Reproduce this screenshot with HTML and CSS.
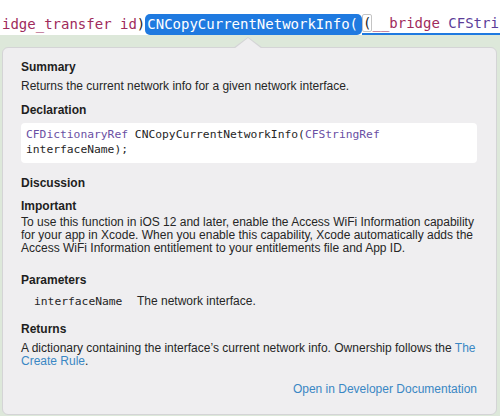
FILE: index.html
```html
<!DOCTYPE html>
<html>
<head>
<meta charset="utf-8">
<link rel="stylesheet" href="styles.css">
</head>
<body>
<div class="editor">
  <div class="codeline"><span class="kw">idge_transfer id</span>)<span class="sel">CNCopyCurrentNetworkInfo(</span><span class="rest"><span class="paren">(</span><span class="kw">__bridge</span> <span class="ty">CFStri</span></span></div>
  <div class="backdrop">
    <div class="popover">
      <h3 class="head">Summary</h3>
      <p class="text t-sum">Returns the current network info for a given network interface.</p>
      <h3 class="head h-decl">Declaration</h3>
      <div class="code"><span class="ty">CFDictionaryRef</span> CNCopyCurrentNetworkInfo(<span class="ty">CFStringRef</span><br>interfaceName);</div>
      <h3 class="head h-disc">Discussion</h3>
      <h3 class="head h-imp">Important</h3>
      <p class="text t-imp">To use this function in iOS 12 and later, enable the Access WiFi Information capability<br>for your app in Xcode. When you enable this capability, Xcode automatically adds the<br>Access WiFi Information entitlement to your entitlements file and App ID.</p>
      <h3 class="head h-par">Parameters</h3>
      <div class="param"><span class="pname">interfaceName</span><span class="pdesc">The network interface.</span></div>
      <h3 class="head h-ret">Returns</h3>
      <p class="text t-ret">A dictionary containing the interface’s current network info. Ownership follows the <a class="link">The<br>Create Rule</a>.</p>
      <div class="open"><a class="link">Open in Developer Documentation</a></div>
    </div>
  </div>
</div>
</body>
</html>
```
FILE: styles.css
```css
html, body {
  margin: 0;
  padding: 0;
  background: #ffffff;
  width: 500px;
  height: 416px;
  overflow: hidden;
}
.editor {
  width: 500px;
  height: 416px;
  display: flex;
  flex-direction: column;
}
.codeline {
  font-family: "DejaVu Sans Mono", monospace;
  font-size: 14px;
  line-height: 21px;
  height: 21px;
  margin-top: 14px;
  margin-left: 2px;
  white-space: nowrap;
  color: #262626;
  display: flex;
}
.codeline .kw { color: #a02b5c; }
.codeline .ty { color: #5c3d99; }
.sel {
  background: #1f7ae0;
  color: #ffffff;
  border-radius: 5px;
  padding: 0 4px 0 2px;
}
.rest {
  border-bottom: 2px solid #1f7ae0;
  flex: 1;
  line-height: 19px;
}
.paren {
  border: 1px solid #c4c4c4;
  border-radius: 2px;
}
.backdrop {
  flex: 1;
  background: #dde8da;
  padding: 12px 3px 3px 2px;
  position: relative;
}
.popover {
  position: relative;
  background: #efeef0;
  border: 1px solid #d4d4d6;
  border-radius: 6px;
  height: 353px;
  padding: 13px 19px 0 18px;
  font-family: "Liberation Sans", Arial, sans-serif;
  font-size: 12px;
  line-height: 13px;
  color: #262626;
}
.popover::before {
  content: "";
  position: absolute;
  top: -11px;
  left: 230px;
  width: 0;
  height: 0;
  border-left: 15px solid transparent;
  border-right: 15px solid transparent;
  border-bottom: 11px solid #d4d4d6;
}
.popover::after {
  content: "";
  position: absolute;
  top: -10px;
  left: 231px;
  width: 0;
  height: 0;
  border-left: 14px solid transparent;
  border-right: 14px solid transparent;
  border-bottom: 11px solid #efeef0;
}
.head {
  margin: 0;
  font-size: 12px;
  font-weight: bold;
  line-height: 13px;
  color: #1e1e1e;
}
.text { margin: 0; }
.t-sum { margin-top: 6px; }
.h-decl { margin-top: 11px; }
.code {
  margin-top: 6px;
  background: #ffffff;
  border-radius: 4px;
  padding: 5px 5px;
  height: 30px;
  font-family: "DejaVu Sans Mono", monospace;
  font-size: 11.3px;
  line-height: 14.5px;
  color: #262626;
}
.code .ty { color: #6a4fa3; }
.h-disc { margin-top: 14px; }
.h-imp { margin-top: 10px; }
.t-imp { margin-top: 3px; white-space: nowrap; }
.h-par { margin-top: 19px; }
.param {
  margin-top: 8px;
  padding-left: 13px;
  display: flex;
}
.pname {
  font-family: "DejaVu Sans Mono", monospace;
  font-size: 11.3px;
  width: 103px;
}
.h-ret { margin-top: 15px; }
.t-ret { margin-top: 6px; }
.link { color: #3a87c4; }
.open {
  margin-top: 15px;
  display: flex;
  justify-content: flex-end;
}
```
